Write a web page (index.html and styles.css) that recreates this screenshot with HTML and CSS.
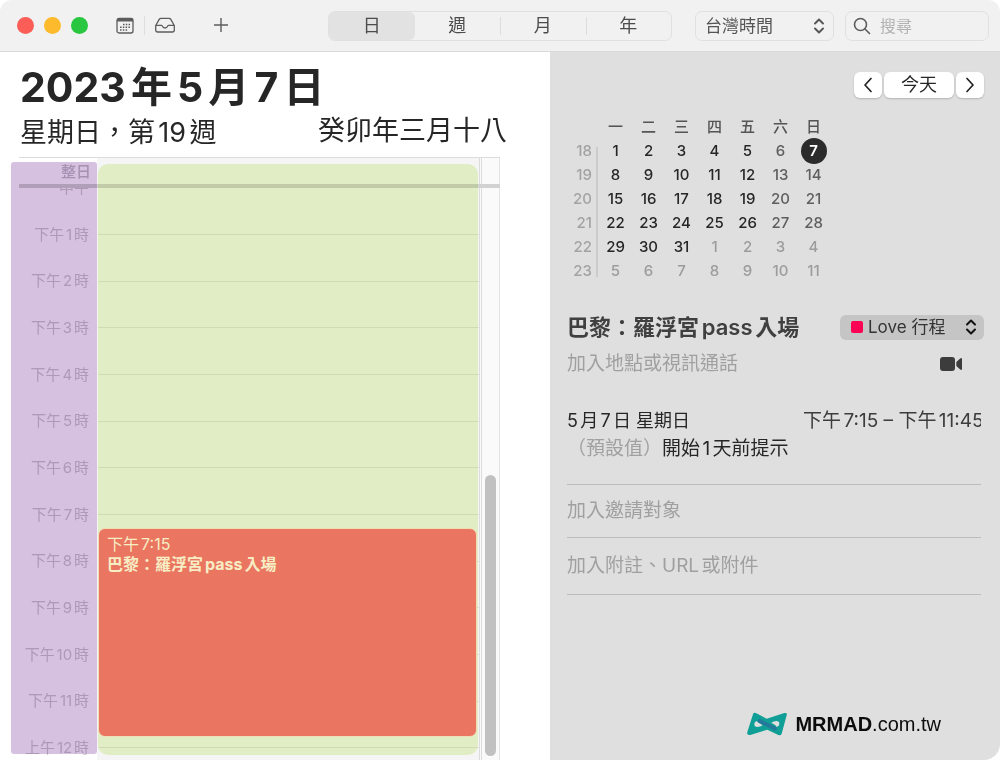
FILE: index.html
```html
<!DOCTYPE html>
<html lang="zh-Hant">
<head>
<meta charset="utf-8">
<meta name="viewport" content="width=device-width, initial-scale=1">
<title>行事曆</title>
<link rel="stylesheet" href="styles.css">
</head>
<body>
<div class="window">
  <header class="toolbar">
    <div class="lights">
      <button class="light light-close" aria-label="關閉"></button>
      <button class="light light-min" aria-label="縮到最小"></button>
      <button class="light light-zoom" aria-label="縮放"></button>
    </div>
    <div class="tools">
      <button class="tool" aria-label="行事曆列表">
        <svg width="20" height="20" viewBox="0 0 20 20" fill="none" stroke="#5c5c5c" stroke-width="1.3">
          <rect x="2" y="2.500" width="16" height="14.500" rx="2"/>
          <path d="M2 4h16" stroke-width="3"/>
          <path d="M8 8.500h8M5 11.200h11M5 13.900h8" stroke-width="1.500" stroke-dasharray="1.500 1.300"/>
        </svg>
      </button>
      <span class="tool-sep"></span>
      <button class="tool" aria-label="收件匣">
        <svg width="22" height="20" viewBox="0 0 22 20" fill="none" stroke="#5c5c5c" stroke-width="1.3" stroke-linejoin="round">
          <path d="M1.700 9.500 5.200 3.400Q5.800 2.300 7 2.300h8q1.200 0 1.800 1.100l3.500 6.100V14q0 2-2 2H3.700q-2 0-2-2zM1.700 9.300H7.500q.6 0 .8.700.8 2 2.700 2t2.700-2q.2-.7.800-.7h5.800"/>
        </svg>
      </button>
      <button class="tool tool-add" aria-label="新增行程">
        <svg width="16" height="20" viewBox="0 0 16 20" stroke="#5c5c5c" stroke-width="1.400"><path d="M1 9h14M8 2v14"/></svg>
      </button>
    </div>
    <nav class="views" aria-label="檢視">
      <button class="view view-on">日</button>
      <button class="view">週</button>
      <button class="view">月</button>
      <button class="view">年</button>
    </nav>
    <label class="zone">
      <select class="zone-select" aria-label="時區"><option>台灣時間</option></select>
      <svg width="12" height="18" viewBox="0 0 12 18" fill="none" stroke="#555" stroke-width="1.900" stroke-linecap="round" stroke-linejoin="round"><path d="M2 6.500 6 2.500l4 4M2 11.500l4 4 4-4"/></svg>
    </label>
    <label class="search">
      <svg width="18" height="18" viewBox="0 0 18 18" fill="none" stroke="#5c5c5c" stroke-width="1.600" stroke-linecap="round"><circle cx="7.500" cy="7.500" r="6"/><path d="m12 12 4.500 4.500"/></svg>
      <input class="search-input" type="text" placeholder="搜尋" aria-label="搜尋">
    </label>
  </header>

  <div class="content">
    <main class="day">
      <h1 class="day-title">2023年5月7日</h1>
      <div class="day-sub">
        <span class="weekday">星期日，第19週</span>
        <span class="lunar">癸卯年三月十八</span>
      </div>
      <section class="schedule">
        <div class="allday">
          <div class="label allday-label">整日</div>
          <div class="cell"></div>
          <div class="gutter"></div>
        </div>
        <div class="hours">
          <div class="hour-list">
            <div class="hour hour-cut"><div class="label">中午</div></div>
            <div class="hour"><div class="label">下午1時</div></div>
            <div class="hour"><div class="label">下午2時</div></div>
            <div class="hour"><div class="label">下午3時</div></div>
            <div class="hour"><div class="label">下午4時</div></div>
            <div class="hour"><div class="label">下午5時</div></div>
            <div class="hour"><div class="label">下午6時</div></div>
            <div class="hour"><div class="label">下午7時</div></div>
            <div class="hour"><div class="label">下午8時</div></div>
            <div class="hour"><div class="label">下午9時</div></div>
            <div class="hour"><div class="label">下午10時</div></div>
            <div class="hour"><div class="label">下午11時</div></div>
            <div class="hour"><div class="label">上午12時</div></div>
          </div>
          <div class="gutter"></div>
        </div>
        <div class="tint tint-times"></div>
        <div class="tint tint-events"></div>
        <article class="event">
          <div>下午7:15</div>
          <div class="event-name">巴黎：羅浮宮pass入場</div>
        </article>
        <div class="scroll-thumb"></div>
      </section>
    </main>

    <aside class="side">
      <div class="pager">
        <button class="page-btn" aria-label="前一天"><svg width="12" height="18" viewBox="0 0 12 18" fill="none" stroke="#222" stroke-width="1.700" stroke-linecap="round" stroke-linejoin="round"><path d="M9 2.500 3 9l6 6.500"/></svg></button>
        <button class="page-btn page-today">今天</button>
        <button class="page-btn" aria-label="後一天"><svg width="12" height="18" viewBox="0 0 12 18" fill="none" stroke="#222" stroke-width="1.700" stroke-linecap="round" stroke-linejoin="round"><path d="m3 2.500 6 6.500-6 6.500"/></svg></button>
      </div>

      <table class="mini">
        <thead>
          <tr><td class="corner"></td><th>一</th><th>二</th><th>三</th><th>四</th><th>五</th><th>六</th><th>日</th></tr>
        </thead>
        <tbody>
          <tr><th class="wk wk-first">18</th><td>1</td><td>2</td><td>3</td><td>4</td><td>5</td><td class="we">6</td><td><span class="today">7</span></td></tr>
          <tr><th class="wk">19</th><td>8</td><td>9</td><td>10</td><td>11</td><td>12</td><td class="we">13</td><td class="we">14</td></tr>
          <tr><th class="wk">20</th><td>15</td><td>16</td><td>17</td><td>18</td><td>19</td><td class="we">20</td><td class="we">21</td></tr>
          <tr><th class="wk">21</th><td>22</td><td>23</td><td>24</td><td>25</td><td>26</td><td class="we">27</td><td class="we">28</td></tr>
          <tr><th class="wk">22</th><td>29</td><td>30</td><td>31</td><td class="out">1</td><td class="out">2</td><td class="out">3</td><td class="out">4</td></tr>
          <tr><th class="wk wk-last">23</th><td class="out">5</td><td class="out">6</td><td class="out">7</td><td class="out">8</td><td class="out">9</td><td class="out">10</td><td class="out">11</td></tr>
        </tbody>
      </table>

      <div class="detail-head">
        <h2 class="detail-title">巴黎：羅浮宮pass入場</h2>
        <label class="picker">
          <span class="swatch"></span>
          <select class="picker-select" aria-label="行事曆"><option>Love 行程</option></select>
          <svg width="12" height="18" viewBox="0 0 12 18" fill="none" stroke="#111" stroke-width="2" stroke-linecap="round" stroke-linejoin="round"><path d="M2 6.500 6 2.500l4 4M2 11.500l4 4 4-4"/></svg>
        </label>
      </div>
      <div class="place">
        <input class="field" type="text" placeholder="加入地點或視訊通話" aria-label="地點">
        <button class="video" aria-label="視訊通話"><svg width="22" height="14" viewBox="0 0 22 14" fill="#3c3c3c"><rect width="15" height="14" rx="3"/><path d="M16.300 5 20.200 1.500Q22 .5 22 2v10q0 1.500-1.800.5L16.300 9z"/></svg></button>
      </div>

      <div class="when">
        <span class="when-date">5月7日 星期日</span>
        <span class="when-time">下午7:15 – 下午11:45</span>
      </div>
      <div class="alert"><span class="muted">（預設值）</span>開始1天前提示</div>

      <div class="row"><input class="field" type="text" placeholder="加入邀請對象" aria-label="邀請對象"></div>
      <div class="row row-notes"><input class="field" type="text" placeholder="加入附註、URL或附件" aria-label="附註"></div>

      <div class="brand">
        <svg class="brand-mark" width="42" height="24" viewBox="0 0 126 72">
          <path d="M21 7Q23 0 31 4L62 20 115 3q10-2 7 7L107 65q-3 7-10 4L64 53 13 69Q1 71 4 60z" fill="#109f96"/>
          <path d="M33 28q-8 1-8 9t9 8q8 0 16-5L39 33q-4-2-6-5z" fill="#dfdfdf"/>
          <path d="M91 44q9-1 9-9t-9-8q-8 0-15 5l10 6q4 2 5 6z" fill="#dfdfdf"/>
          <path d="M41 27 87 50" fill="none" stroke="#24789a" stroke-width="11" stroke-linecap="round"/>
        </svg>
        <span class="brand-name"><b>MRMAD</b>.com.tw</span>
      </div>
    </aside>
  </div>
</div>
</body>
</html>
```
FILE: styles.css
```css
* { box-sizing: border-box; }

body {
  margin: 0;
  background: #fff;
  color: #262626;
  font-family: Inter, "Noto Sans CJK TC", sans-serif;
  text-autospace: normal;
}

button, input, select {
  margin: 0;
  padding: 0;
  border: 0;
  background: none;
  font: inherit;
  color: inherit;
  appearance: none;
  outline: 0;
}

svg { display: block; flex: none; }

.window {
  display: flex;
  flex-direction: column;
  height: 100vh;
  min-height: 760px;
  overflow: hidden;
  border-radius: 12px 12px 16px 0;
  background: #fff;
}

/* Toolbar */
.toolbar {
  display: flex;
  align-items: center;
  height: 52px;
  flex: none;
  padding: 0 11px 0 17px;
  background: #f1f1f1;
  border-bottom: 1px solid #d9d9d9;
}

.lights { display: flex; gap: 10px; }
.light { width: 17px; height: 17px; border-radius: 50%; }
.light-close { background: #fb5d57; }
.light-min { background: #fdba2d; }
.light-zoom { background: #29c73f; }

.tools { display: flex; align-items: center; margin-left: 27px; }
.tool-sep { width: 1px; height: 19px; margin: 0 9px; background: #dedede; }
.tool-add { margin-left: 37px; }

.views {
  display: flex;
  width: 344px;
  height: 30px;
  margin-left: auto;
  border: 1px solid #e0e0e0;
  border-radius: 7px;
}
.view {
  flex: 1;
  font-size: 18px;
  line-height: 26px;
  color: #4c4c4c;
}
.view-on { background: #e2e2e2; border-radius: 6px; }
.view + .view + .view { background: linear-gradient(#ddd, #ddd) left center / 1px 18px no-repeat; }

.zone, .search {
  display: flex;
  align-items: center;
  height: 30px;
  border: 1px solid #e0e0e0;
  border-radius: 7px;
}
.zone { width: 139px; margin-left: 23px; padding: 0 8px 0 9px; color: #555; }
.zone-select { flex: 1; font-size: 17px; line-height: 26px; }
.search { width: 144px; margin-left: 11px; padding: 0 7px; }
.search-input { width: 80px; margin-left: 9px; font-size: 16px; line-height: 26px; }
.search-input::placeholder { color: #b2b2b2; }

/* Layout */
.content { display: grid; grid-template-columns: 55fr 45fr; flex: 1; min-height: 0; }

/* Day view */
.day { display: flex; flex-direction: column; min-width: 0; min-height: 0; }
.day-title {
  margin: 0;
  padding: 8px 0 0 20px;
  font-size: 41px;
  line-height: 54px;
  font-weight: 700;
}
.day-sub {
  display: flex;
  justify-content: space-between;
  height: 43px;
  padding: 0 43px 0 20px;
  font-size: 27px;
  line-height: 36px;
}
.weekday { padding-top: 1px; }
.lunar { line-height: 34px; }

.schedule {
  position: relative;
  display: flex;
  flex-direction: column;
  flex: 1;
  min-height: 0;
  margin: 0 50px 0 11px;
  overflow: hidden;
}
.label {
  width: 86px;
  flex: none;
  padding-right: 8px;
  text-align: right;
  font-size: 15px;
  line-height: 20px;
  color: #ceccd0;
}
.allday {
  display: flex;
  height: 31px;
  flex: none;
  margin-left: 8px;
  border-top: 1px solid #dcdcdc;
  border-bottom: 4px solid #d2d2d2;
}
.allday-label { width: 78px; padding: 4px 6px 0 0; color: #c6c0ca; font-weight: 500; }
.cell { flex: 1; background: #f5f5f5; }
.gutter {
  width: 21px;
  flex: none;
  background: #fafafa;
  border-left: 3px double #dcdcdc;
  border-right: 1px solid #e4e4e4;
}

.hours { display: flex; flex: 1; min-height: 0; overflow: hidden; }
.hour-list { flex: 1; min-width: 0; }
.hour {
  display: flex;
  align-items: center;
  height: 47px;
  background: linear-gradient(#e2e2e2, #e2e2e2) 87px center / 100% 1px no-repeat, linear-gradient(#f5f5f5, #f5f5f5) 86px 0 no-repeat;
}
.hour:nth-child(3n) { height: 46px; }
.hour-cut { height: 23px; background: linear-gradient(#f5f5f5, #f5f5f5) 86px 0 no-repeat; align-items: flex-start; }
.hour-cut .label { height: 7px; line-height: 0; overflow: hidden; }

.tint { position: absolute; mix-blend-mode: multiply; pointer-events: none; }
.tint-times { left: 0; top: 5px; bottom: 6px; width: 86px; border-radius: 3px; background: #d7c1e1; }
.tint-events { left: 87px; right: 22px; top: 7px; bottom: 5px; border-radius: 10px; background: #ebf7cc; }

.event {
  position: absolute;
  left: 87px;
  right: 23px;
  top: 371px;
  height: 209px;
  padding: 5px 8px;
  border: 1px solid #f0dfb4;
  border-radius: 7px;
  background: #ea7560;
  color: #f7edc4;
  font-size: 16px;
  line-height: 20px;
}
.event-name { font-weight: 700; }
.scroll-thumb {
  position: absolute;
  right: 4px;
  top: 318px;
  bottom: 4px;
  width: 11px;
  border-radius: 6px;
  background: #c1c1c1;
}

/* Side panel */
.side {
  display: flex;
  flex-direction: column;
  min-width: 0;
  padding: 20px 19px 22px 17px;
  background: #dfdfdf;
  font-size: 19px;
}
.pager { display: flex; justify-content: flex-end; gap: 2px; margin-right: -3px; }
.page-btn {
  display: flex;
  align-items: center;
  justify-content: center;
  width: 28px;
  height: 26px;
  border-radius: 6px;
  background: #fff;
  box-shadow: 0 1px 2px rgba(0, 0, 0, .2);
}
.page-today { width: 70px; font-size: 18px; line-height: 24px; }

.mini {
  width: 263px;
  margin-top: 17px;
  border-collapse: collapse;
  table-layout: fixed;
  text-align: center;
  font-size: 15px;
  line-height: 24px;
  font-weight: 500;
}
.mini td, .mini th { height: 24px; padding: 0; }
.mini th { font-weight: 500; color: #555; }
.mini .corner { width: 32px; }
.mini .wk {
  padding-right: 7px;
  text-align: right;
  color: #a3a3a3;
  background: linear-gradient(#cbcbcb, #cbcbcb) right 1px top 0 / 2px 24px no-repeat;
}
.mini .wk-first { background-position: right 1px top 8px; }
.mini .wk-last { background-size: 2px 18px; }
.mini .we { color: #5e5e5e; }
.mini .out { color: #9c9c9c; }
.today {
  display: block;
  width: 26px;
  height: 26px;
  margin: -1px auto;
  border-radius: 50%;
  background: #2b2b2b;
  color: #fff;
  line-height: 26px;
  font-weight: 600;
}

.detail-head {
  display: flex;
  justify-content: space-between;
  align-items: center;
  margin: 28px -3px 0 0;
}
.detail-title { margin: 0; font-size: 22px; line-height: 32px; font-weight: 600; color: #404040; }
.picker {
  display: flex;
  align-items: center;
  width: 144px;
  height: 25px;
  padding: 0 7px 0 11px;
  border-radius: 6px;
  background: #c5c5c5;
  color: #333;
}
.swatch { width: 12px; height: 12px; margin-right: 5px; border-radius: 2px; background: #fb0255; }
.picker-select { flex: 1; font-size: 17px; line-height: 24px; }

.field { flex: 1; min-width: 0; line-height: 28px; }
.field::placeholder { color: #a0a0a0; opacity: 1; }
.place { display: flex; align-items: center; height: 41px; padding-right: 19px; }
.when { display: flex; justify-content: space-between; margin-top: 23px; line-height: 28px; }
.when-date { flex: none; font-size: 18px; }
.when-time { width: 178px; overflow: hidden; white-space: nowrap; color: #3c3c3c; }
.alert { line-height: 28px; margin-bottom: 21px; }
.muted { color: #a0a0a0; }
.row { display: flex; align-items: center; height: 53px; border-top: 1px solid #bcbcbc; }
.row-notes { height: 58px; border-bottom: 1px solid #bcbcbc; }

.brand { display: flex; align-items: center; gap: 7px; margin: auto 40px 0 auto; }
.brand-name { font-family: "Liberation Sans", Arial, sans-serif; font-size: 20px; line-height: 28px; color: #0c0c0c; }
```
